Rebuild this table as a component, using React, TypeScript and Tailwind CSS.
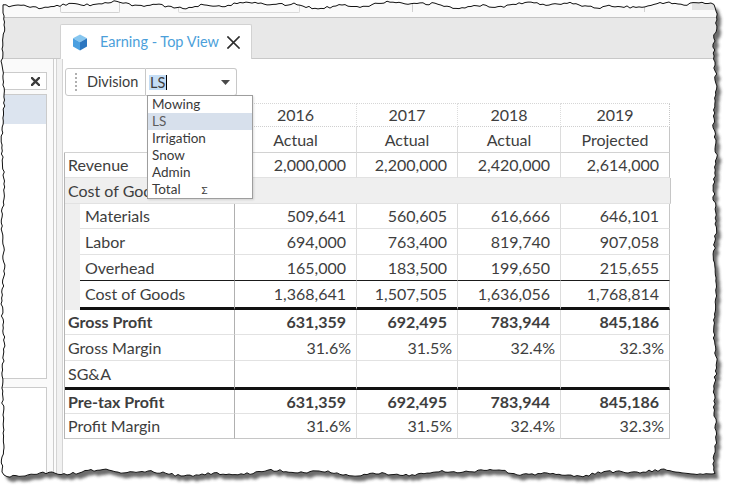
import React from 'react';

// deterministic jitter for the torn-paper edge
function mulberry32(seed: number) {
  return function () {
    let t = (seed += 0x6d2b79f5);
    t = Math.imul(t ^ (t >>> 15), t | 1);
    t ^= t + Math.imul(t ^ (t >>> 7), t | 61);
    return ((t ^ (t >>> 14)) >>> 0) / 4294967296;
  };
}

function tornEdge(): [number, number][] {
  const r = mulberry32(7);
  const pts: [number, number][] = [];
  for (let x = 3; x <= 715; x += 3) {
    pts.push([x, 5 + 2 * Math.sin(x / 23) + 1.2 * Math.sin(x / 7.3 + 2) + (r() - 0.5) * 2.5]);
  }
  for (let y = 8; y <= 472; y += 3) {
    pts.push([715 + 1.2 * Math.sin(y / 11) + (r() - 0.5) * 2.5, y]);
  }
  for (let x = 715; x >= 3; x -= 3) {
    pts.push([x, 473 + 2 * Math.sin(x / 29 + 1) + 1.2 * Math.sin(x / 9) + (r() - 0.5) * 2.5]);
  }
  for (let y = 472; y >= 8; y -= 3) {
    pts.push([3 + Math.sin(y / 13) + (r() - 0.5) * 2, y]);
  }
  return pts;
}

const EDGE = tornEdge();
const EDGE_STR = EDGE.map(p => `${p[0].toFixed(1)},${p[1].toFixed(1)}`).join(' ');
const SHADOW_STR = EDGE.map(p => `${(p[0] + 4).toFixed(1)},${(p[1] + 5).toFixed(1)}`).join(' ');
const CLIP = `polygon(${EDGE.map(p => `${p[0].toFixed(1)}px ${p[1].toFixed(1)}px`).join(', ')})`;

const COLS = [
  { w: 'w-[122px]', year: '2016', kind: 'Actual' },
  { w: 'w-[101px]', year: '2017', kind: 'Actual' },
  { w: 'w-[103px]', year: '2018', kind: 'Actual' },
  { w: 'w-[109px]', year: '2019', kind: 'Projected' },
];

type Row = {
  label: string;
  vals: string[];
  h: string;
  edge: 'light' | 'black' | 'thick' | 'last';
  bold?: boolean;
  indent?: boolean;
  group?: boolean;
  pct?: boolean;
};

const ROWS: Row[] = [
  { label: 'Revenue', vals: ['2,000,000', '2,200,000', '2,420,000', '2,614,000'], h: 'h-[25px]', edge: 'light' },
  { label: 'Cost of Goods', vals: [], h: 'h-[26px]', edge: 'light', group: true },
  { label: 'Materials', vals: ['509,641', '560,605', '616,666', '646,101'], h: 'h-[25px]', edge: 'light', indent: true },
  { label: 'Labor', vals: ['694,000', '763,400', '819,740', '907,058'], h: 'h-[26px]', edge: 'light', indent: true },
  { label: 'Overhead', vals: ['165,000', '183,500', '199,650', '215,655'], h: 'h-[26px]', edge: 'black', indent: true },
  { label: 'Cost of Goods', vals: ['1,368,641', '1,507,505', '1,636,056', '1,768,814'], h: 'h-[29px]', edge: 'thick', indent: true },
  { label: 'Gross Profit', vals: ['631,359', '692,495', '783,944', '845,186'], h: 'h-[25px]', edge: 'light', bold: true },
  { label: 'Gross Margin', vals: ['31.6%', '31.5%', '32.4%', '32.3%'], h: 'h-[26px]', edge: 'light', pct: true },
  { label: 'SG&A', vals: ['', '', '', ''], h: 'h-[29px]', edge: 'thick' },
  { label: 'Pre-tax Profit', vals: ['631,359', '692,495', '783,944', '845,186'], h: 'h-[24px]', edge: 'light', bold: true },
  { label: 'Profit Margin', vals: ['31.6%', '31.5%', '32.4%', '32.3%'], h: 'h-[25px]', edge: 'last', pct: true },
];

const EDGE_CLASS = {
  light: 'border-b border-b-[#e2e2e2]',
  black: 'border-b border-b-[#1a1a1a]',
  thick: 'border-b-[3px] border-b-[#111]',
  last: 'border-b border-b-[#c6c6c6]',
};

const DIVISIONS = ['Mowing', 'LS', 'Irrigation', 'Snow', 'Admin', 'Total'];

function Cube() {
  return (
    <svg width="16" height="17" viewBox="0 0 16 17">
      <polygon points="8,0.5 15,4.3 8,8.2 1,4.3" fill="#86c6ef" />
      <polygon points="1,4.3 8,8.2 8,16.5 1,12.6" fill="#4a9fe0" />
      <polygon points="8,8.2 15,4.3 15,12.6 8,16.5" fill="#2c76c0" />
    </svg>
  );
}

function Cross({ size, stroke, color }: { size: number; stroke: number; color: string }) {
  return (
    <svg width={size} height={size} viewBox={`0 0 ${size} ${size}`}>
      <path d={`M1 1L${size - 1} ${size - 1}M${size - 1} 1L1 ${size - 1}`} stroke={color} strokeWidth={stroke} strokeLinecap="square" />
    </svg>
  );
}

function DataTable() {
  return (
    <div className="ml-[1px] mt-[7px] w-[607px] text-[16px] text-[#3e3e3e]">
      {/* header rows */}
      <div className="flex h-[24px]">
        <div className="w-[171px] border-r border-r-[#dcdcdc]" />
        {COLS.map((c, i) => (
          <div
            key={c.year}
            className={`${c.w} flex items-center justify-center border-t border-t-[#d6d6d6] border-b border-dotted border-b-[#cfcfcf] border-r ${i === 3 ? 'border-r-[#c6c6c6]' : 'border-r-[#dcdcdc]'}`}
          >
            {c.year}
          </div>
        ))}
      </div>
      <div className="flex h-[26px]">
        <div className="w-[171px] border-r border-r-[#dcdcdc] border-b border-b-[#d2d2d2]" />
        {COLS.map((c, i) => (
          <div
            key={c.year}
            className={`${c.w} flex items-center justify-center border-b border-b-[#d2d2d2] border-r ${i === 3 ? 'border-r-[#c6c6c6]' : 'border-r-[#dcdcdc]'}`}
          >
            {c.kind}
          </div>
        ))}
      </div>

      {/* body */}
      <div className="border-l border-l-[#b4b4b4] w-[607px]">
        {ROWS.map((row, ri) => {
          if (row.group) {
            return (
              <div key={ri} className={`flex ${row.h} bg-[#efefef] border-b border-b-[#e2e2e2] border-r border-r-[#c6c6c6]`}>
                {/* the open division list covers the rest of this label */}
                <div className="w-[82px] pl-[3px] flex items-center whitespace-nowrap overflow-hidden">{row.label}</div>
              </div>
            );
          }
          const edge = EDGE_CLASS[row.edge];
          return (
            <div key={ri} className={`flex ${row.h} ${row.bold ? 'font-bold' : ''}`}>
              {row.indent && <div className="w-[15px] bg-[#efefef]" />}
              <div
                className={`${row.indent ? 'w-[155px] pl-[5px]' : 'w-[170px] pl-[3px]'} flex items-center whitespace-nowrap border-r border-r-[#b0b0b0] ${edge}`}
              >
                {row.label}
              </div>
              {COLS.map((c, i) => (
                <div
                  key={c.year}
                  className={`${c.w} flex items-center justify-end ${row.pct ? 'pr-[5px]' : 'pr-[10px]'} border-r ${i === 3 ? 'border-r-[#c6c6c6]' : 'border-r-[#dcdcdc]'} ${edge}`}
                >
                  {row.vals[i]}
                </div>
              ))}
            </div>
          );
        })}
      </div>
    </div>
  );
}

function DivisionFilter() {
  return (
    <div className="ml-[2px] mt-[9px] flex h-[28px] text-[#3c3c3c]">
      <div className="w-[81px] flex items-center border border-[#c8c8c8] rounded-l-[3px] bg-white">
        <div className="ml-[9px] h-[18px] border-l-2 border-dotted border-l-[#b0b0b0]" />
        <span className="ml-[10px] text-[14.5px]">Division</span>
      </div>
      <div className="relative w-[91px] flex items-center border border-l-0 border-[#c8c8c8] rounded-r-[3px] bg-white">
        <span className="ml-[3px] px-[1px] bg-[#c4ddf5] text-[14.5px] leading-[15px]">LS</span>
        <span className="w-px h-[15px] bg-black" />
        <svg className="ml-auto mr-[6px]" width="9" height="5" viewBox="0 0 9 5">
          <polygon points="0,0 9,0 4.5,5" fill="#4a4a4a" />
        </svg>
        {/* open list */}
        <div className="absolute left-[1px] top-[26px] z-10 w-[106px] border border-[#9e9e9e] bg-white shadow-[1px_1px_2px_rgba(0,0,0,0.12)]">
          {DIVISIONS.map(d => (
            <div
              key={d}
              className={`h-[17px] leading-[17px] pl-[4px] text-[13.5px] flex items-center ${d === 'LS' ? 'bg-[#d7e0ec] text-[#5c5c5c]' : 'text-[#3a3a3a]'}`}
            >
              <span>{d}</span>
              {d === 'Total' && <span className="ml-[21px] text-[10px] leading-none">Σ</span>}
            </div>
          ))}
        </div>
      </div>
    </div>
  );
}

function Screen() {
  return (
    <div className="relative w-[735px] h-[499px] flex flex-col bg-white" style={{ clipPath: CLIP }}>
      {/* ribbon remnants */}
      <div className="relative h-[17px] bg-[#fafafa] flex">
        <div className="ml-[60px] w-[60px] h-[13px] border border-t-0 border-[#d2d2d2] rounded-b-[2px]" />
        <div className="ml-[58px] w-[122px] h-[13px] border border-t-0 border-[#dadada] rounded-b-[2px]" />
        <div className="ml-[112px] w-px h-[12px] bg-[#d0d0d0]" />
        <div className="ml-[231px] w-px h-[12px] bg-[#d0d0d0]" />
        <div className="ml-[47px] w-[30px] h-[10px] bg-[#e4e4e4]" />
      </div>

      {/* document tab strip */}
      <div className="h-[42px] flex items-end pl-[60px] bg-[#e8e8e8] border-t border-t-[#c4c4c4] border-b border-b-[#c8c8c8]">
        <div className="relative -mb-px w-[192px] h-[35px] flex items-center bg-white border border-b-0 border-[#d2d2d2] rounded-t-[2px]">
          <div className="ml-[11px]">
            <Cube />
          </div>
          <span className="ml-[12px] text-[14.5px] text-[#4c9fda] whitespace-nowrap">Earning - Top View</span>
          <div className="ml-auto mr-[11px]">
            <Cross size={13} stroke={1.7} color="#2e2e2e" />
          </div>
        </div>
      </div>

      <div className="flex flex-1">
        {/* left pane */}
        <div className="w-[54px] flex flex-col bg-[#fafafa] border-r border-r-[#cdcdcd]">
          <div className="mt-[13px] w-[47px] h-[18px] flex items-center justify-end pr-[6px] bg-white border border-l-0 border-[#cbcbcb]">
            <Cross size={9} stroke={2.4} color="#3c3c3c" />
          </div>
          <div className="mt-[4px] w-[47px] h-[285px] bg-white border border-l-0 border-[#cbcbcb]">
            <div className="h-[29px] bg-[#dce4ef]" />
          </div>
          <div className="mt-[8px] w-[47px] flex-1 bg-white border border-l-0 border-[#cbcbcb]" />
        </div>
        {/* splitter */}
        <div className="w-[9px] flex bg-[#fbfbfb]">
          <div className="ml-[2px] w-[7px] bg-[#f1f1f1] border-l border-r border-[#d4d4d4]" />
        </div>
        {/* document */}
        <div className="flex-1 flex flex-col bg-white font-['Lato']">
          <DivisionFilter />
          <DataTable />
        </div>
      </div>
    </div>
  );
}

export default function App() {
  return (
    <div className="relative w-[735px] h-[499px] overflow-hidden bg-white font-['Lato',sans-serif]">
      <svg className="absolute inset-0" width="735" height="499">
        <defs>
          <filter id="blur" x="-5%" y="-5%" width="110%" height="110%">
            <feGaussianBlur stdDeviation="1.6" />
          </filter>
        </defs>
        <polygon points={SHADOW_STR} fill="#3a3a3a" opacity="0.75" filter="url(#blur)" />
      </svg>
      <Screen />
      <svg className="absolute inset-0 pointer-events-none" width="735" height="499">
        <polygon points={EDGE_STR} fill="none" stroke="#111" strokeWidth="1" />
      </svg>
    </div>
  );
}
